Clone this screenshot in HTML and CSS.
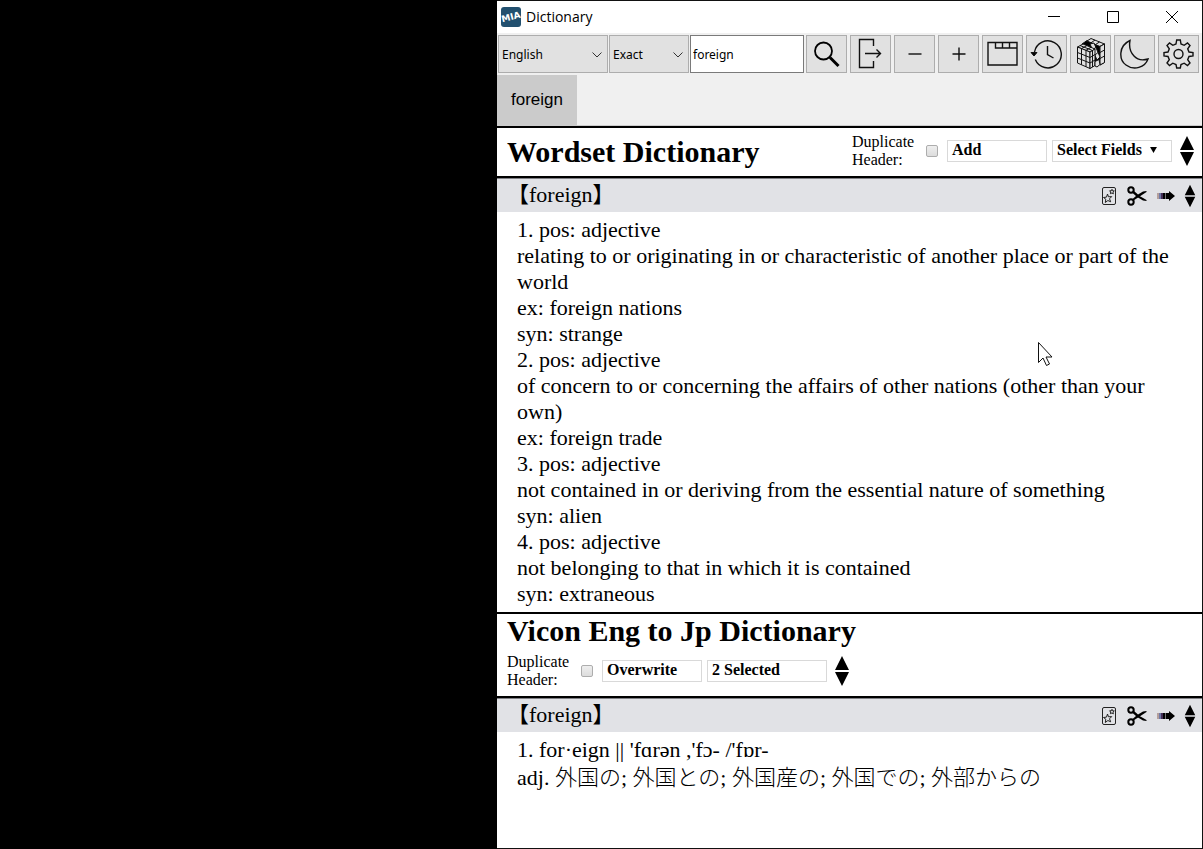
FILE: index.html
```html
<!DOCTYPE html>
<html lang="en">
<head>
<meta charset="utf-8">
<title>Dictionary</title>
<link rel="stylesheet" href="styles.css">
</head>
<body>
<svg class="defs" aria-hidden="true">
  <symbol id="updown" viewBox="0 0 16 32"><path d="M8 1L15 15H1zM8 31L15 17H1z"/></symbol>
  <symbol id="card" viewBox="0 0 14 18"><g fill="none" stroke="#222"><rect x=".5" y=".5" width="13" height="17" rx="1.5"/><path d="M5.500 7l1 2.800 3.200-.2-2.200 2.200 1.200 3-2.800-1.300-2.600 2 .5-3.300-2.300-1.700 3-.4zM10 2.300l.5 1.500 1.800.1-1.300 1.200.4 1.700-1.500-.8-1.500.7.3-1.700-1.100-1.200 1.800-.1z" stroke-width="1"/></g></symbol>
  <symbol id="cut" viewBox="0 0 20 20"><g fill="none" stroke="#000" stroke-width="2"><circle cx="4" cy="4" r="2.700"/><circle cx="4" cy="16" r="2.700"/></g><path d="M5 6.500L7 5l4 3.600 5-3 3.500-.6v1L6.500 14.500l-1.500-1 4-3.500zM11 11.500l2-1.200 6.500 3.700v1l-3.500-.6z"/></symbol>
  <symbol id="send" viewBox="0 0 18 10"><path d="M0 2h2v6H0z" fill="#b5a09c"/><path d="M2 2h2v6H2z" fill="#6f78a5"/><path d="M4 2h2v6H4z" fill="#432d55"/><path d="M6 2h2v6H6zM8.500 2H12V0l6 5-6 5V8H8.500z"/></symbol>
</svg>
<main class="desktop">
  <section class="window">
    <header class="titlebar">
      <svg class="logo" viewBox="0 0 20 20"><rect width="20" height="20" rx="3" fill="#22506f"/><text x="10" y="13" text-anchor="middle" transform="rotate(-14 10 10)">MIA</text></svg>
      <span class="caption">Dictionary</span>
      <button class="sys" aria-label="Minimize"><svg viewBox="0 0 12 12"><path d="M0 5.500h12"/></svg></button>
      <button class="sys" aria-label="Maximize"><svg viewBox="0 0 12 12"><path d="M.5.500h11v11H.5z"/></svg></button>
      <button class="sys" aria-label="Close"><svg viewBox="0 0 12 12"><path d="M0 0l12 12M12 0L0 12"/></svg></button>
    </header>
    <div class="toolbar">
      <div class="combo language"><select aria-label="Language"><option>English</option></select><svg viewBox="0 0 10 6"><path d="M.5.500L5 5 9.500.500"/></svg></div>
      <div class="combo match"><select aria-label="Match type"><option>Exact</option></select><svg viewBox="0 0 10 6"><path d="M.5.500L5 5 9.500.500"/></svg></div>
      <input class="query" type="text" value="foreign" aria-label="Search">
      <div class="tools">
        <button aria-label="Search"><svg viewBox="0 0 32 32"><g fill="none" stroke="#000"><circle cx="13.500" cy="13" r="8.500" stroke-width="1.800"/><path d="M20 19.500L28.500 28" stroke-width="3"/></g></svg></button>
        <button aria-label="Open"><svg viewBox="0 0 32 32"><path d="M19.500 8V1.500h-14v28h14v-6.500M11 15.500h15M22.500 11.500l4 4-4 4"/></svg></button>
        <button aria-label="Smaller text"><svg viewBox="0 0 32 32"><path d="M10.500 16h13"/></svg></button>
        <button aria-label="Larger text"><svg viewBox="0 0 32 32"><path d="M10.500 16h13M17 9.500v13"/></svg></button>
        <button aria-label="Tabs"><svg viewBox="0 0 32 32"><path d="M2 4.500h29v22.500H2zM9.500 4.500V10H31M16.500 4.500V10M23.500 4.500V10"/></svg></button>
        <button aria-label="History"><svg viewBox="0 0 32 32"><path d="M4.500 14a13.500 13.500 0 1 1 .8 7.500M17.500 8v8.500l6 3.500"/><path d="M1 14.500h6l-3 3.500z" fill="#000" stroke-width="1"/></svg></button>
        <button aria-label="Dictionary groups"><svg viewBox="0 0 32 32">
          <g stroke-width="1" stroke-linejoin="round">
            <path d="M8 6l5-3.500 3 1 10 4.500 1 18-4 1.500-3-3z" fill="#000"/>
            <path d="M13 3l4-2.500L30.500 6 26 8.500z" fill="#e1e1e1"/>
            <path d="M26 8.500L30.500 6v18.500L26 27zM26 14.500l4.500-2.500M26 20.500l4.500-2.500M17 4.800L21 2M21.500 6.500l4-2.500"/>
            <path d="M26 8.500L30.500 6v18.500L26 27z" fill="#e1e1e1"/><path d="M26 14.500l4.500-2.500M26 20.500l4.500-2.500"/>
            <path d="M16 6l4-1 6 14-3 3z" fill="#e1e1e1"/><path d="M18.500 11.500l3.500-2M21 17l3-2.500"/>
            <path d="M3.500 9L9 6l12 5-5 3z" fill="#e1e1e1"/><path d="M7.500 10.500l5.500-3M12 12.300l5-3M6 7.500l12.500 5"/>
            <path d="M3.500 9L16 14v16.500L3.500 25z" fill="#e1e1e1"/><path d="M3.500 14.500L16 19.500M3.500 20L16 25M7.500 10.500v16.300M12 12.300v16.500"/>
            <path d="M16 14l5-3v16.500l-5 3z" fill="#e1e1e1"/><path d="M16 19.500l5-3M16 25l5-3M18.500 12.500V29"/>
            <path d="M21 23.500l4-2 1 5-3 2.500-2-1z" fill="#e1e1e1"/>
          </g></svg></button>
        <button aria-label="Night mode"><svg viewBox="0 0 32 32"><path d="M12 2.500C0 8 1 22 8 27c8 6 19 2.500 22-6-5 1.500-10 1.500-14-3-4-4-5-10-4-15.500z"/></svg></button>
        <button aria-label="Settings"><svg viewBox="0 0 32 32"><circle cx="16.500" cy="16" r="4.500"/><path d="M14 6l.7-4h3.600l.7 4 3.200 1.300L25.500 5l2.500 2.500-2.300 3.300L27 14l4 .5v3.400l-4 .6-1.300 3.200 2.300 3.300-2.500 2.500-3.300-2.300L19 26.500l-.7 3.500h-3.600l-.7-3.500-3.200-1.300-3.300 2.300L5 25l2.300-3.300L6 18.500l-4-.6v-3.400l4-.5 1.300-3.200L5 7.500 7.500 5l3.300 2.300z"/></svg></button>
      </div>
    </div>
    <nav class="tabs"><button>foreign</button></nav>

    <header class="dict-head">
      <h1>Wordset Dictionary</h1>
      <div class="controls">
        <label for="dup1">Duplicate Header:</label><input id="dup1" type="checkbox">
        <button class="field mode">Add</button>
        <button class="field picker">Select Fields <svg class="caret" viewBox="0 0 8 7"><path d="M0 0h8L4 7z"/></svg></button>
        <button class="move" aria-label="Move dictionary"><svg><use href="#updown"/></svg></button>
      </div>
    </header>
    <div class="word-bar">
      <h2>【foreign】</h2>
      <button class="act card" aria-label="Add card"><svg><use href="#card"/></svg></button>
      <button class="act cut" aria-label="Cut"><svg><use href="#cut"/></svg></button>
      <button class="act send" aria-label="Send"><svg><use href="#send"/></svg></button>
      <button class="act step" aria-label="Move entry"><svg><use href="#updown"/></svg></button>
    </div>
    <article class="entry">
      1. pos: adjective<br>
      relating to or originating in or characteristic of another place or part of the world<br>
      ex: foreign nations<br>
      syn: strange<br>
      2. pos: adjective<br>
      of concern to or concerning the affairs of other nations (other than your own)<br>
      ex: foreign trade<br>
      3. pos: adjective<br>
      not contained in or deriving from the essential nature of something<br>
      syn: alien<br>
      4. pos: adjective<br>
      not belonging to that in which it is contained<br>
      syn: extraneous
    </article>

    <header class="dict-head">
      <h1>Vicon Eng to Jp Dictionary</h1>
      <div class="controls">
        <label for="dup2">Duplicate Header:</label><input id="dup2" type="checkbox">
        <button class="field mode">Overwrite</button>
        <button class="field picker">2 Selected</button>
        <button class="move" aria-label="Move dictionary"><svg><use href="#updown"/></svg></button>
      </div>
    </header>
    <div class="word-bar">
      <h2>【foreign】</h2>
      <button class="act card" aria-label="Add card"><svg><use href="#card"/></svg></button>
      <button class="act cut" aria-label="Cut"><svg><use href="#cut"/></svg></button>
      <button class="act send" aria-label="Send"><svg><use href="#send"/></svg></button>
      <button class="act step" aria-label="Move entry"><svg><use href="#updown"/></svg></button>
    </div>
    <article class="entry">
      <p>1. for·eign || 'fɑrən ,'fɔ- /'fɒr-</p>
      <p class="jp" lang="ja">adj. 外国の; 外国との; 外国産の; 外国での; 外部からの</p>
    </article>
  </section>
  <svg class="pointer" viewBox="0 0 15 25" aria-hidden="true"><path d="M.5.500v20l4.500-4.500 3.500 7.500 3-1.500-3.500-7h6z"/></svg>
</main>
</body>
</html>
```
FILE: styles.css
```css
* { box-sizing: border-box; }
body { margin: 0; background: #000; color: #000; font-family: "Liberation Serif", "Noto Sans CJK JP", serif; }
button, select, input { font: inherit; color: inherit; margin: 0; padding: 0; border: 0; border-radius: 0; background: none; }
svg { display: block; }
h1, h2, p { margin: 0; }
.defs { position: absolute; width: 0; height: 0; }
.desktop { position: relative; display: flex; min-height: 100vh; padding-left: 497px; }
.window { flex: 1; min-width: 0; background: #fff; border: solid #111; border-width: 1px 1px 1px 0; }

.titlebar { display: flex; align-items: center; height: 32px; padding: 0 1px 0 4px; font: 14px "Open Sans", sans-serif; }
.logo { width: 20px; height: 20px; }
.logo text { font: bold 9px "DejaVu Sans", sans-serif; fill: #fff; }
.caption { flex: 1; margin-left: 5px; padding-bottom: 2px; }
.sys { display: grid; place-items: center; width: 59px; height: 32px; }
.sys svg { width: 12px; height: 12px; fill: none; stroke: #000; }

.toolbar { display: flex; gap: 1px; height: 42px; padding: 2px 3px 2px 1px; background: #f0f0f0; font: 12px "Noto Sans", sans-serif; }
.combo { position: relative; }
.combo select { width: 100%; height: 38px; padding: 0 3px; border: 1px solid #adadad; background: #e1e1e1; appearance: none; }
.combo svg { position: absolute; right: 6px; top: 17px; width: 10px; height: 6px; fill: none; stroke: #333; pointer-events: none; }
.language { width: 110px; }
.match { width: 80px; }
.query { flex: 1; min-width: 60px; height: 38px; padding: 0 2px; border: 1px solid #7a7a7a; background: #fff; }
.tools { display: flex; gap: 3px; margin-left: 1px; }
.tools button { display: flex; align-items: center; width: 41px; height: 38px; padding-left: 3px; border: 1px solid #adadad; background: #e1e1e1; }
.tools svg { flex: none; width: 32px; height: 32px; fill: none; stroke: #111; stroke-width: 1.4; }

.tabs { height: 51px; background: #f0f0f0; border-bottom: 1px solid #ccc; }
.tabs button { width: 80px; height: 50px; background: #cbcbcb; font: 17px "Liberation Sans", sans-serif; }

.dict-head { display: flex; flex-wrap: wrap; justify-content: space-between; align-items: center; padding: 0 7px 0 10px; border: solid #000; border-width: 2px 0; }
.dict-head h1 { font-size: 30px; line-height: 34px; }
.controls { display: flex; align-items: center; height: 48px; padding-bottom: 2px; font-size: 16px; line-height: 18px; }
.controls label { width: 74px; }
.controls input { width: 12px; height: 12px; border: 1px solid #adadad; border-radius: 2px; background: linear-gradient(#eee, #ddd); appearance: none; }
.field { height: 22px; padding: 0 4px 2px; border: 1px solid #d9d9d9; background: #fff; font-weight: bold; line-height: 18px; text-align: left; }
.mode { width: 100px; margin: 0 5px 0 9px; }
.picker { width: 120px; margin-right: 7px; }
.caret { display: inline-block; width: 7px; height: 6px; margin-left: 4px; vertical-align: 2px; }
.move svg { width: 16px; height: 32px; }

.word-bar { display: flex; align-items: center; height: 34px; padding: 0 6px 0 10px; border-top: 1px solid #808085; background: #e1e2e6; }
.word-bar h2 { flex: 1; padding-bottom: 2px; font-size: 22px; font-weight: normal; line-height: 30px; }
.act svg { width: 100%; height: 100%; }
.card { width: 14px; height: 18px; margin-right: 11px; }
.cut { width: 20px; height: 20px; margin-right: 10px; }
.send { width: 18px; height: 10px; margin-right: 9px; }
.step { width: 12px; height: 24px; }

.entry { padding: 5px 20px; font-size: 22px; line-height: 26px; }
.jp { font-weight: 300; line-height: 30px; }
.pointer { position: absolute; left: 1038px; top: 342px; width: 15px; height: 25px; fill: #fff; stroke: #111; }
```
